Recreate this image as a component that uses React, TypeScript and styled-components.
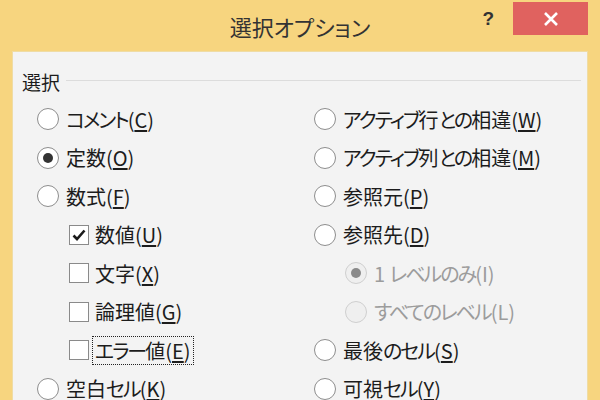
import styled, { createGlobalStyle } from "styled-components";

const GlobalStyle = createGlobalStyle`
  html, body {
    margin: 0;
    padding: 0;
    width: 600px;
    height: 400px;
    overflow: hidden;
  }
  #root {
    width: 600px;
    height: 400px;
  }
`;

const FONT = `"Noto Sans CJK JP", "Noto Sans", "Liberation Sans", sans-serif`;

type Item = {
  label: string;
  key: string;
  after?: string;
  kind: "radio" | "check";
  checked?: boolean;
  disabled?: boolean;
  indent?: boolean;
  focused?: boolean;
};

const leftItems: Item[] = [
  { label: "コメント(", key: "C", after: ")", kind: "radio" },
  { label: "定数(", key: "O", after: ")", kind: "radio", checked: true },
  { label: "数式(", key: "F", after: ")", kind: "radio" },
  { label: "数値(", key: "U", after: ")", kind: "check", checked: true, indent: true },
  { label: "文字(", key: "X", after: ")", kind: "check", indent: true },
  { label: "論理値(", key: "G", after: ")", kind: "check", indent: true },
  { label: "エラー値(", key: "E", after: ")", kind: "check", indent: true, focused: true },
  { label: "空白セル(", key: "K", after: ")", kind: "radio" },
];

const rightItems: Item[] = [
  { label: "アクティブ行との相違(", key: "W", after: ")", kind: "radio" },
  { label: "アクティブ列との相違(", key: "M", after: ")", kind: "radio" },
  { label: "参照元(", key: "P", after: ")", kind: "radio" },
  { label: "参照先(", key: "D", after: ")", kind: "radio" },
  { label: "1 レベルのみ(I)", key: "", kind: "radio", checked: true, disabled: true, indent: true },
  { label: "すべてのレベル(L)", key: "", kind: "radio", disabled: true, indent: true },
  { label: "最後のセル(", key: "S", after: ")", kind: "radio" },
  { label: "可視セル(", key: "Y", after: ")", kind: "radio" },
];

// kana in the original UI font are much narrower than kanji
function withKana(text: string) {
  return text.split(/([\u3040-\u30ff]+)/).map((part, i) =>
    /[\u3040-\u30ff]/.test(part) ? <Kana key={i}>{part}</Kana> : part
  );
}

function Option({ item }: { item: Item }) {
  return (
    <Row $indent={item.indent}>
      {item.kind === "radio" ? (
        <Radio $disabled={item.disabled}>
          {item.checked && <Dot $disabled={item.disabled} />}
        </Radio>
      ) : (
        <Check>
          {item.checked && (
            <svg width="16" height="16" viewBox="0 0 16 16">
              <path d="M2.5 8.5 L6 12 L13.5 3.5" fill="none" stroke="#1a1a1a" strokeWidth="2.6" />
            </svg>
          )}
        </Check>
      )}
      <Label $disabled={item.disabled} $focused={item.focused} $check={item.kind === "check"}>
        {withKana(item.label)}
        {item.key && <u>{item.key}</u>}
        {item.after}
      </Label>
    </Row>
  );
}

export default function App() {
  return (
    <>
      <GlobalStyle />
      <Window>
        <TitleBar>
          <span />
          <Title>選択オプション</Title>
          <Controls>
            <Help>?</Help>
            <Close>
              <svg width="16" height="16" viewBox="0 0 16 16">
                <path d="M2 2 L14 14 M14 2 L2 14" stroke="#fff" strokeWidth="2.6" />
              </svg>
            </Close>
          </Controls>
        </TitleBar>
        <Panel>
          <GroupHeader>
            <GroupTitle>選択</GroupTitle>
            <Rule />
          </GroupHeader>
          <Columns>
            <Column>
              {leftItems.map((it) => (
                <Option key={it.label} item={it} />
              ))}
            </Column>
            <Column>
              {rightItems.map((it) => (
                <Option key={it.label} item={it} />
              ))}
            </Column>
          </Columns>
        </Panel>
      </Window>
    </>
  );
}

const Window = styled.div`
  width: 600px;
  height: 400px;
  background: #f7d57f;
  display: flex;
  flex-direction: column;
  font-family: ${FONT};
  font-feature-settings: "palt";
  overflow: hidden;
`;

const TitleBar = styled.div`
  height: 51px;
  flex: none;
  display: grid;
  grid-template-columns: 1fr auto 1fr;
  align-items: start;
`;

const Title = styled.div`
  font-size: 22px;
  color: #333;
  line-height: 52px;
`;

const Controls = styled.div`
  display: flex;
  justify-content: flex-end;
  align-items: flex-start;
  padding-right: 12px;
`;

const Help = styled.div`
  font-family: "Liberation Sans", sans-serif;
  font-weight: bold;
  font-size: 19px;
  color: #333;
  margin-top: 8px;
  margin-right: 19px;
`;

const Close = styled.div`
  width: 75px;
  height: 33px;
  margin-top: 2px;
  background: #e0625f;
  display: flex;
  align-items: center;
  justify-content: center;
`;

const Panel = styled.div`
  flex: 1;
  margin: 0 12px;
  background: #f3f3f3;
  border: 1px solid #efdca4;
  border-bottom: none;
  padding: 16px 6px 0 9px;
`;

const GroupHeader = styled.div`
  display: flex;
  align-items: center;
  gap: 6px;
  height: 26px;
`;

const GroupTitle = styled.div`
  font-size: 19px;
  color: #1c1c1c;
`;

const Rule = styled.div`
  flex: 1;
  height: 1px;
  background: #dcdcdc;
  margin-top: -2px;
`;

const Columns = styled.div`
  display: grid;
  grid-template-columns: 277px 1fr;
  padding-left: 15px;
  margin-top: 6px;
`;

const Column = styled.div`
  display: flex;
  flex-direction: column;
`;

const Row = styled.div<{ $indent?: boolean }>`
  height: 38.5px;
  display: flex;
  align-items: center;
  padding-left: ${(p) => (p.$indent ? "31px" : "0")};
`;

const Radio = styled.div<{ $disabled?: boolean }>`
  width: 20px;
  height: 20px;
  flex: none;
  border-radius: 50%;
  border: 1px solid ${(p) => (p.$disabled ? "#cfcfcf" : "#8d8d8d")};
  background: ${(p) => (p.$disabled ? "#efefef" : "#fff")};
  display: flex;
  align-items: center;
  justify-content: center;
`;

const Dot = styled.div<{ $disabled?: boolean }>`
  width: 10px;
  height: 10px;
  border-radius: 50%;
  background: ${(p) => (p.$disabled ? "#8a8a8a" : "#333")};
`;

const Check = styled.div`
  width: 18px;
  height: 18px;
  flex: none;
  margin-left: 1px;
  border: 1.5px solid #8a8a8a;
  background: #fff;
  display: flex;
  align-items: center;
  justify-content: center;
`;

const Label = styled.span<{ $disabled?: boolean; $focused?: boolean; $check?: boolean }>`
  font-size: 20px;
  line-height: 27px;
  margin-left: ${(p) => (p.$check ? "4px" : "5px")};
  padding: 0 2px;
  color: ${(p) => (p.$disabled ? "#9c9c9c" : "#1c1c1c")};
  outline: ${(p) => (p.$focused ? "1px dotted #222" : "none")};
  white-space: nowrap;
  u {
    text-underline-offset: 2px;
  }
`;

const Kana = styled.span`
  letter-spacing: -2px;
`;
